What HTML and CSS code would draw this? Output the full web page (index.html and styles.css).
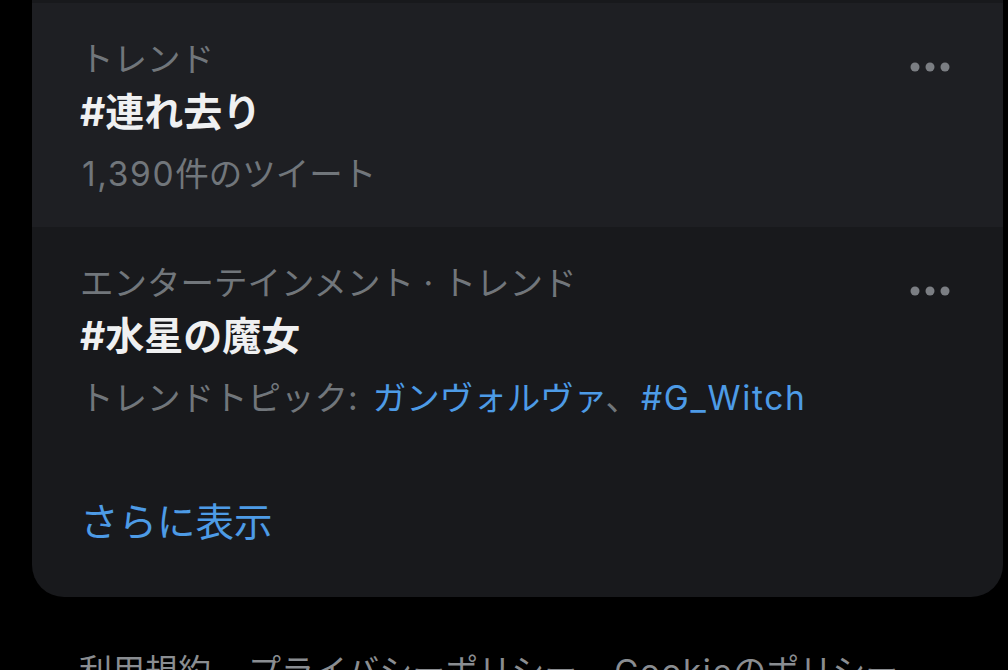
FILE: index.html
```html
<!DOCTYPE html>
<html lang="ja">
<head>
  <meta charset="UTF-8">
  <meta name="viewport" content="width=device-width, initial-scale=1.0">
  <title>トレンド</title>
  <link rel="stylesheet" href="styles.css">
</head>
<body>
  <section class="panel">
    <div class="trend trend-active">
      <div class="trend-body">
        <div class="trend-meta">トレンド</div>
        <div class="trend-name">#連れ去り</div>
        <div class="trend-meta trend-count"><span class="latin">1,390</span>件のツイート</div>
      </div>
      <button class="more" aria-label="その他">
        <svg viewBox="0 0 50 50" width="50" height="50">
          <circle cx="10" cy="25" r="4.5"/>
          <circle cx="25" cy="25" r="4.5"/>
          <circle cx="40" cy="25" r="4.5"/>
        </svg>
      </button>
    </div>

    <div class="trend">
      <div class="trend-body">
        <div class="trend-meta">エンターテインメント · トレンド</div>
        <div class="trend-name">#水星の魔女</div>
        <div class="trend-meta trend-count">
          <span class="topic-label">トレンドトピック:</span><a href="#">ガンヴォルヴァ</a>、<a class="latin" href="#">#G_Witch</a>
        </div>
      </div>
      <button class="more" aria-label="その他">
        <svg viewBox="0 0 50 50" width="50" height="50">
          <circle cx="10" cy="25" r="4.5"/>
          <circle cx="25" cy="25" r="4.5"/>
          <circle cx="40" cy="25" r="4.5"/>
        </svg>
      </button>
    </div>

    <a class="show-more" href="#">さらに表示</a>
  </section>

  <nav class="footer">
    <a href="#">利用規約</a>
    <a href="#">プライバシーポリシー</a>
    <a href="#"><span class="latin">Cookie</span>のポリシー</a>
  </nav>
</body>
</html>
```

FILE: styles.css
```css
body {
  margin: 0;
  padding: 0 5px 0 32px;
  background: #000;
  font-family: Inter, "Noto Sans CJK JP", sans-serif;
  color: #71767b;
  overflow: hidden;
  height: 670px;
}

a {
  color: #4d9be6;
  text-decoration: none;
}

/* Latin runs are set wider in the original system font */
.latin {
  letter-spacing: 0.05em;
}

.panel {
  background: #18191c;
  border-radius: 0 0 32px 32px;
  padding-top: 3px;
}

.trend {
  display: flex;
  align-items: flex-start;
  padding: 34px 48px 22px 48px;
  height: 168px;
}

.trend-active {
  background: #1e1f23;
}

.trend-body {
  flex: 1;
}

.trend-meta {
  font-size: 33.5px;
  line-height: 44px;
  white-space: nowrap;
}

.trend-name {
  font-size: 39px;
  font-weight: 700;
  line-height: 62px;
  color: #eff0f1;
}

.trend-count {
  line-height: 62px;
}

.topic-label {
  margin-right: 15px;
}

.trend-count .latin {
  margin-left: 2px;
}

.more {
  background: none;
  border: none;
  padding: 0;
  margin-top: 5px;
  width: 50px;
  height: 50px;
  cursor: pointer;
}

.more svg {
  display: block;
  fill: #7b7e83;
}

.show-more {
  display: block;
  padding: 46px 48px 50px 48px;
  font-size: 38.5px;
  line-height: 50px;
}

.footer {
  display: flex;
  gap: 37px;
  margin-top: 54px;
  padding: 0 47px;
  font-size: 33px;
  line-height: 40px;
  white-space: nowrap;
}

.footer a {
  color: #8a8d91;
}
```
